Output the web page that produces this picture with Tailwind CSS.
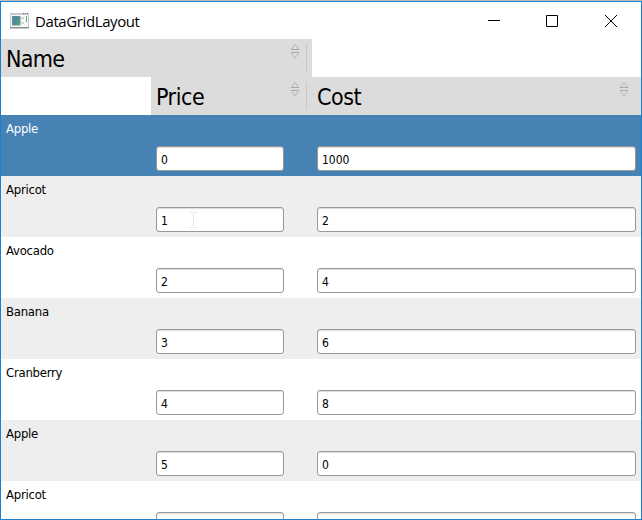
<!DOCTYPE html>
<html lang="en">
<head>
<meta charset="utf-8">
<title>DataGridLayout</title>
<script src="https://cdn.jsdelivr.net/npm/@tailwindcss/browser@4"></script>
</head>
<body class="w-[642px] h-[520px] overflow-hidden bg-[#bdbdbd] pt-px font-['DejaVu_Sans_Condensed','DejaVu_Sans',sans-serif] [font-stretch:condensed] text-black">
<svg class="hidden">
  <symbol id="sort" viewBox="0 0 10 16">
    <path d="M1.5 6 L5 1.5 L8.5 6 M1.5 10.5 L5 15 L8.5 10.5" fill="none" stroke="#b4b4b4"/>
    <path d="M1 6.5H9M1 9.5H9" fill="none" stroke="#a8a8a8"/>
  </symbol>
</svg>
<div class="flex h-[519px] w-[642px] flex-col overflow-hidden border border-[#1c80d0] bg-white">
  <header class="flex h-[37px] shrink-0 items-center pl-[9px] pr-6">
    <svg class="h-4 w-[19px]" viewBox="0 0 19 16" shape-rendering="crispEdges">
      <defs><linearGradient id="g" x1="0" y1="0" x2="1" y2="1"><stop stop-color="#4c79ad"/><stop offset="1" stop-color="#55a878"/></linearGradient></defs>
      <path fill="#c9cbd0" d="M0 0h19v16H0z"/>
      <path fill="#f7f7f8" d="M1 2h17v12H1z"/>
      <path fill="#8d9095" d="M0 14h19v1H0z"/>
      <path fill="#4d6d9f" d="M13 0h1v1h-1zM15 0h1v1h-1zM17 0h1v1h-1z"/>
      <path fill="url(#g)" stroke="#7b90a0" stroke-width=".5" d="M2 3h8v9H2z"/>
      <path fill="#d3d5d6" d="M11 4h3v2h-3zM11 9h3v2h-3z"/>
      <path fill="#54b07c" d="M16 3h1v6h-1z"/>
    </svg>
    <h1 class="ml-[6px] flex-1 font-['Open_Sans','Noto_Sans',sans-serif] text-[15px] leading-5 tracking-[-0.4px] [font-stretch:normal]">DataGridLayout</h1>
    <svg class="h-3 w-[130px]" viewBox="0 0 130 12" fill="none" stroke="#000">
      <path d="M1 5.5h12M59.5.5h11v11h-11z"/>
      <path d="M118 0l12 12M130 0l-12 12"/>
    </svg>
  </header>
  <div class="flex h-[38px] shrink-0">
    <div class="flex w-[311px] bg-[#dcdcdc] pl-[5px] text-[23px] leading-[40px] tracking-[-0.7px]"><span class="flex-1">Name</span><svg class="mt-1 h-4 w-[10px]"><use href="#sort"/></svg><i class="ml-[6px] mr-[5px] mt-[5px] h-7 w-px bg-[#c8c8c8]"></i></div>
  </div>
  <div class="flex h-[38px] shrink-0 pl-[150px] text-[23px] leading-[40px] tracking-[-0.45px]">
    <div class="flex w-[161px] bg-[#dcdcdc] pl-[5px]"><span class="flex-1">Price</span><svg class="mt-1 h-4 w-[10px]"><use href="#sort"/></svg><i class="ml-[6px] mr-[5px] mt-[5px] h-7 w-px bg-[#c8c8c8]"></i></div>
    <div class="flex flex-1 bg-[#dcdcdc] pl-[5px] pr-3"><span class="flex-1">Cost</span><svg class="mt-1 h-4 w-[10px]"><use href="#sort"/></svg></div>
  </div>
  <main id="rows" class="min-h-0 flex-1 overflow-hidden"></main>
</div>
<script>
const data = [['Apple','0','1000'],['Apricot','1','2'],['Avocado','2','4'],['Banana','3','6'],['Cranberry','4','8'],['Apple','5','0'],['Apricot','','']];
const field = 'relative h-[25px] rounded-[3px] border border-[#999999] bg-white pl-1 text-[12px] leading-[26px] text-black shadow-[inset_0_1px_1px_#dddddd]';
const cursor = '<svg class="absolute left-[33px] top-[4px] h-4 w-[7px]" viewBox="0 0 7 16" fill="none" stroke="#e6e6e6"><path d="M0 .5h3M4 .5h3M3.5 1v14M0 15.5h3M4 15.5h3"/></svg>';
document.getElementById('rows').innerHTML = data.map(([name, price, cost], i) => `
  <div class="h-[61px] pl-[5px] pr-[5px] text-[13px] ${i === 0 ? 'bg-[#4682b4] text-white' : i % 2 ? 'bg-[#eeeeee]' : 'bg-white'}">
    <div class="h-[31px] leading-[27px] tracking-[-0.25px]">${name}</div>
    <div class="flex pl-[150px]"><div class="w-[128px] ${field}">${price}${i === 1 ? cursor : ''}</div><div class="ml-[33px] flex-1 ${field}">${cost}</div></div>
  </div>`).join('');
</script>
</body>
</html>
